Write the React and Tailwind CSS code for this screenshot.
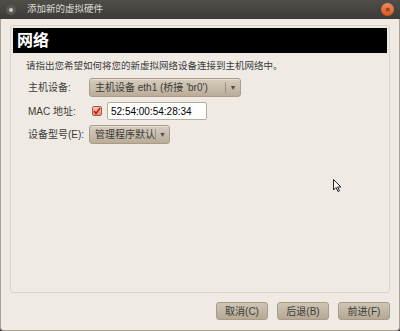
const cjk = { fontFamily: '"Liberation Sans", "Noto Sans CJK SC", sans-serif' };

function Combo({ label, width }) {
  return (
    <div
      className="flex h-[19px] flex-none items-stretch rounded-[3px] border border-[#a89c88] bg-gradient-to-b from-[#d6cdbf] to-[#b9ad99] shadow-[inset_0_1px_0_#e6dfd3]"
      style={{ width }}
    >
      <div className="flex flex-1 items-center whitespace-nowrap pl-[5px] text-[10px] text-[#3c3b37]">{label}</div>
      <div className="my-[3px] w-px bg-[#9d917d]" />
      <div className="flex w-[14px] items-center justify-center text-[7px] text-[#4c4a45]">▼</div>
    </div>
  );
}

function Btn({ children }) {
  return (
    <div className="flex h-[18px] w-[52px] items-center justify-center rounded-[3px] border border-[#a89c88] bg-gradient-to-b from-[#cfc5b5] to-[#b5a994] text-[10px] text-[#3c3b37]">
      {children}
    </div>
  );
}

export default function App() {
  return (
    <div className="h-[331px] w-[400px] overflow-hidden bg-[#3c3b37]" style={cjk}>
      <div className="flex h-[19px] items-center bg-gradient-to-b from-[#4f4e49] to-[#3c3b37] px-[6px]">
        <div className="flex h-[10px] w-[10px] items-center justify-center rounded-full bg-[#5a5954]">
          <div className="h-[4px] w-[4px] rounded-full bg-[#cfcbc3]" />
        </div>
        <div className="ml-[11px] flex-1 text-[9.5px] text-[#dfdbd2]">添加新的虚拟硬件</div>
        <div className="flex h-[13px] w-[13px] items-center justify-center rounded-full bg-gradient-to-b from-[#f08a5d] to-[#d9541c] text-[8px] font-bold leading-none text-[#6a2a0e]">
          ×
        </div>
      </div>
      <div className="flex h-[312px] flex-col rounded-b-[4px] border-x border-b border-[#a9a293] bg-[#efebe4] px-[9px] pb-[10px] pt-[6px]">
        <div className="flex flex-1 flex-col rounded-[3px] border border-[#dad2c3] p-[2px]">
          <div className="flex h-[25px] items-center bg-black pl-[4px] text-[16px] font-bold text-white">网络</div>
          <div className="pl-[13px] pt-[6px] text-[9.5px] text-[#3c3c3c]">请指出您希望如何将您的新虚拟网络设备连接到主机网络中。</div>
          <div className="mt-[5px] flex flex-col gap-[5px] pl-[15px] text-[10px] text-[#3c3b37]">
            <div className="flex items-center">
              <div className="w-[61px]">主机设备:</div>
              <Combo label="主机设备 eth1 (桥接 'br0')" width={152} />
            </div>
            <div className="flex items-center">
              <div className="w-[64px]">MAC 地址:</div>
              <div className="flex h-[10px] w-[10px] items-center justify-center rounded-[2px] border border-[#b4543f] bg-gradient-to-b from-[#f7c3b5] to-[#e48f78]">
                <svg width="8" height="8" viewBox="0 0 8 8">
                  <path d="M1 4 L3 6.5 L7 1" fill="none" stroke="#b3221a" strokeWidth="1.6" />
                </svg>
              </div>
              <div className="ml-[5px] flex h-[18px] w-[100px] items-center rounded-[2px] border border-[#b8ae9d] bg-white pl-[3px] text-[10px] text-black">
                52:54:00:54:28:34
              </div>
            </div>
            <div className="flex items-center">
              <div className="w-[61px]">设备型号(E):</div>
              <Combo label="管理程序默认" width={81} />
            </div>
          </div>
          <div className="relative flex-1">
            <svg className="absolute left-[320px] top-[35px]" width="10" height="14" viewBox="0 0 10 14">
              <path d="M0.5 0.5 L0.5 11 L3 8.5 L5 12.5 L6.5 11.8 L4.6 8 L8 8 Z" fill="#f4f4f4" stroke="#222" strokeWidth="1" />
            </svg>
          </div>
        </div>
        <div className="flex justify-end gap-[9px] pt-[9px]">
          <Btn>取消(C)</Btn>
          <Btn>后退(B)</Btn>
          <Btn>前进(F)</Btn>
        </div>
      </div>
    </div>
  );
}
